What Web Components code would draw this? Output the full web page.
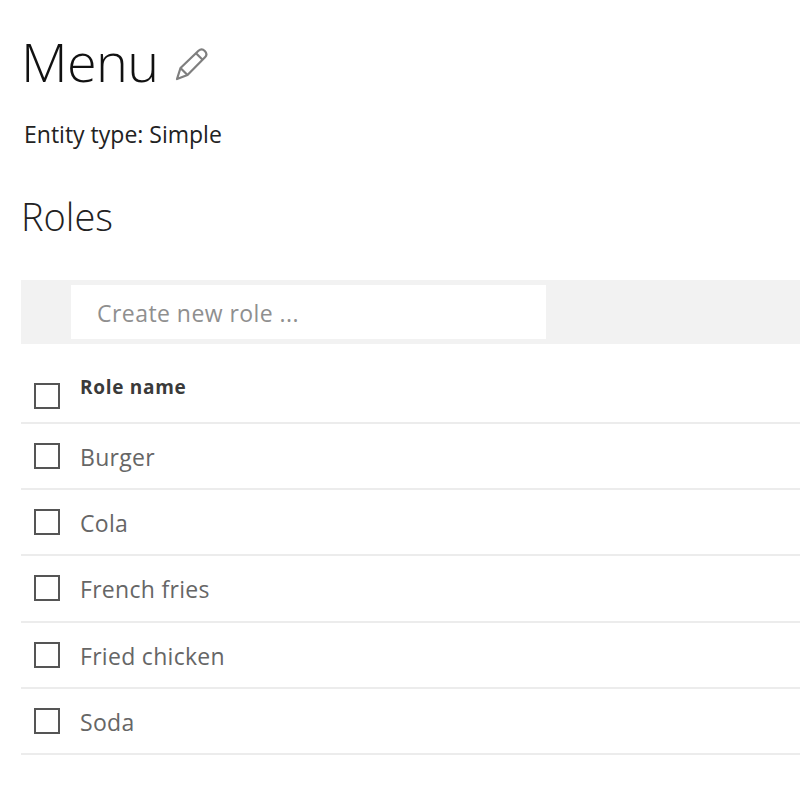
<!DOCTYPE html>
<html>
<head>
<meta charset="utf-8">
<title>Menu</title>
<style>
    html, body { margin: 0; background: #fff; }
    body { font-family: "Open Sans", "Liberation Sans", sans-serif; overflow: hidden; }
</style>
</head>
<body>
<entity-page></entity-page>
<script>
class EntityHeader extends HTMLElement {
    connectedCallback() {
        const shadow = this.attachShadow({mode: 'open'});
        shadow.innerHTML = `
        <style>
        :host { display: block; padding: 28px 0 0 21px; }
        .title { display: flex; align-items: center; gap: 15px; height: 66px; }
        h1 {
            margin: 0;
            font: 300 54px/66px "Open Sans", sans-serif;
            letter-spacing: -0.6px;
            color: #111;
        }
        svg { display: block; margin-top: 8px; }
        p {
            margin: 23px 0 0 3px;
            font: 400 23px/34px "Open Sans", sans-serif;
            letter-spacing: 0;
            color: #222;
        }
        h2 {
            margin: 42px 0 0 0;
            font: 300 38px/46px "Open Sans", sans-serif;
            letter-spacing: 0;
            color: #222;
        }
        </style>
        <div class="title">
            <h1>Menu</h1>
            <svg width="34" height="34" viewBox="0 0 34 34" fill="none" stroke="#7f7f7f" stroke-width="2.2" stroke-linejoin="round">
                <path d="M3 31 L6.5 20 L24.5 2.8 C26.5 1 29 1.2 30.8 3 C32.6 4.8 32.8 7.4 31 9.3 L13.5 27 Z"/>
                <path d="M6.5 20 L13.5 27"/>
                <path d="M22 5.3 L28.6 11.8"/>
            </svg>
        </div>
        <p><slot name="type">Entity type: Simple</slot></p>
        <h2>Roles</h2>`;
    }
}

class RoleToolbar extends HTMLElement {
    connectedCallback() {
        const shadow = this.attachShadow({mode: 'open'});
        shadow.innerHTML = `
        <style>
        :host {
            display: block;
            box-sizing: border-box;
            height: 64px;
            margin-left: 21px;
            padding: 5px 0 4px 50px;
            background: #f2f2f2;
        }
        .box {
            box-sizing: border-box;
            width: 475px;
            height: 54px;
            padding-left: 26px;
            background: #fff;
            font: 400 23px/56px "Open Sans", sans-serif;
            letter-spacing: 0.45px;
            color: #8f8f8f;
        }
        </style>
        <div class="box">Create new role ...</div>`;
    }
}

class RoleRow extends HTMLElement {
    connectedCallback() {
        const shadow = this.attachShadow({mode: 'open'});
        shadow.innerHTML = `
        <style>
        :host {
            display: flex;
            box-sizing: border-box;
            height: 66.2px;
            margin-left: 21px;
            padding-left: 13px;
            align-items: center;
            border-bottom: 2px solid #ececec;
            font: 400 23px/30px "Open Sans", sans-serif;
            letter-spacing: 0.3px;
            color: #666;
        }
        :host([head]) {
            height: 80px;
            align-items: flex-start;
            padding-top: 28px;
            font-weight: 700;
            font-size: 19px;
            line-height: 30px;
            letter-spacing: 0.7px;
            color: #3a3a3a;
        }
        .check {
            flex: none;
            box-sizing: border-box;
            width: 26px;
            height: 26px;
            margin-right: 20px;
            border: 2px solid #555;
        }
        :host([head]) .check { margin-top: 11px; }
        .name { padding-top: 2px; }
        :host([head]) .name { padding-top: 0; }
        </style>
        <span class="check"></span><span class="name"><slot></slot></span>`;
    }
}

class EntityPage extends HTMLElement {
    connectedCallback() {
        const shadow = this.attachShadow({mode: 'open'});
        shadow.innerHTML = `
        <style>
        :host { display: block; width: 800px; height: 786px; overflow: hidden; }
        role-toolbar { margin-top: 41px; }
        </style>
        <entity-header></entity-header>
        <role-toolbar></role-toolbar>
        <role-row head>Role name</role-row>
        <role-row>Burger</role-row>
        <role-row>Cola</role-row>
        <role-row>French fries</role-row>
        <role-row>Fried chicken</role-row>
        <role-row>Soda</role-row>`;
    }
}

customElements.define('entity-header', EntityHeader);
customElements.define('role-toolbar', RoleToolbar);
customElements.define('role-row', RoleRow);
customElements.define('entity-page', EntityPage);
</script>
</body>
</html>
